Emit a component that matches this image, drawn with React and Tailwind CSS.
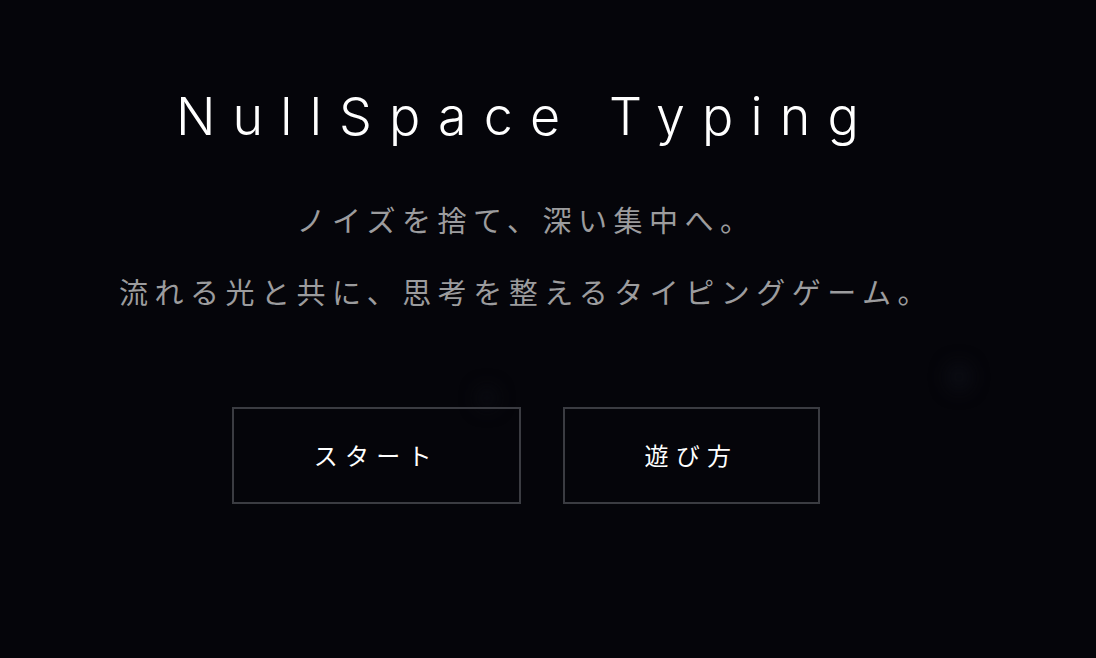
import React from "react";

const specks = [
  { left: "left-[946px]", top: "top-[362px]", size: "w-[26px] h-[30px]", tone: "bg-[#0a0b12]" },
  { left: "left-[476px]", top: "top-[386px]", size: "w-[22px] h-[24px]", tone: "bg-[#090a10]" },
];

const MenuButton = ({ children, onClick }) => (
  <button
    type="button"
    onClick={onClick}
    className="border-2 border-[#3b3c42] bg-transparent px-20 pt-[29px] pb-[31px] text-[24px] leading-[33px] tracking-[0.3em] text-white transition hover:border-[#6b6c74]"
    style={{ fontFamily: '"Noto Sans CJK JP", "Noto Sans", sans-serif' }}
  >
    {children}
  </button>
);

const App = () => {
  const [screen, setScreen] = React.useState("title");

  return (
    <div className="relative min-h-screen overflow-hidden bg-[#05050a]">
      {specks.map((s, i) => (
        <div key={i} className={`absolute rounded-full blur-[8px] ${s.left} ${s.top} ${s.size} ${s.tone}`} />
      ))}

      <div className="relative flex flex-col items-center pt-[91px] pr-[44px]">
        <h1
          className="text-[52px] leading-[52px] font-light tracking-[0.33em] text-white"
          style={{ fontFamily: 'Inter, "Noto Sans", sans-serif' }}
        >
          NullSpace Typing
        </h1>

        <div
          className="mt-[58px] flex flex-col items-center gap-9 text-[29px] leading-[36px] tracking-[6.5px] text-[#9c9c9e]"
          style={{ fontFamily: '"Noto Sans CJK JP", sans-serif' }}
        >
          <p>ノイズを捨て、深い集中へ。</p>
          <p>流れる光と共に、思考を整えるタイピングゲーム。</p>
        </div>

        <div className="mt-[98px] flex gap-[42px]">
          <MenuButton onClick={() => setScreen("game")}>スタート</MenuButton>
          <MenuButton onClick={() => setScreen("howto")}>遊び方</MenuButton>
        </div>
      </div>
    </div>
  );
};

export default App;
